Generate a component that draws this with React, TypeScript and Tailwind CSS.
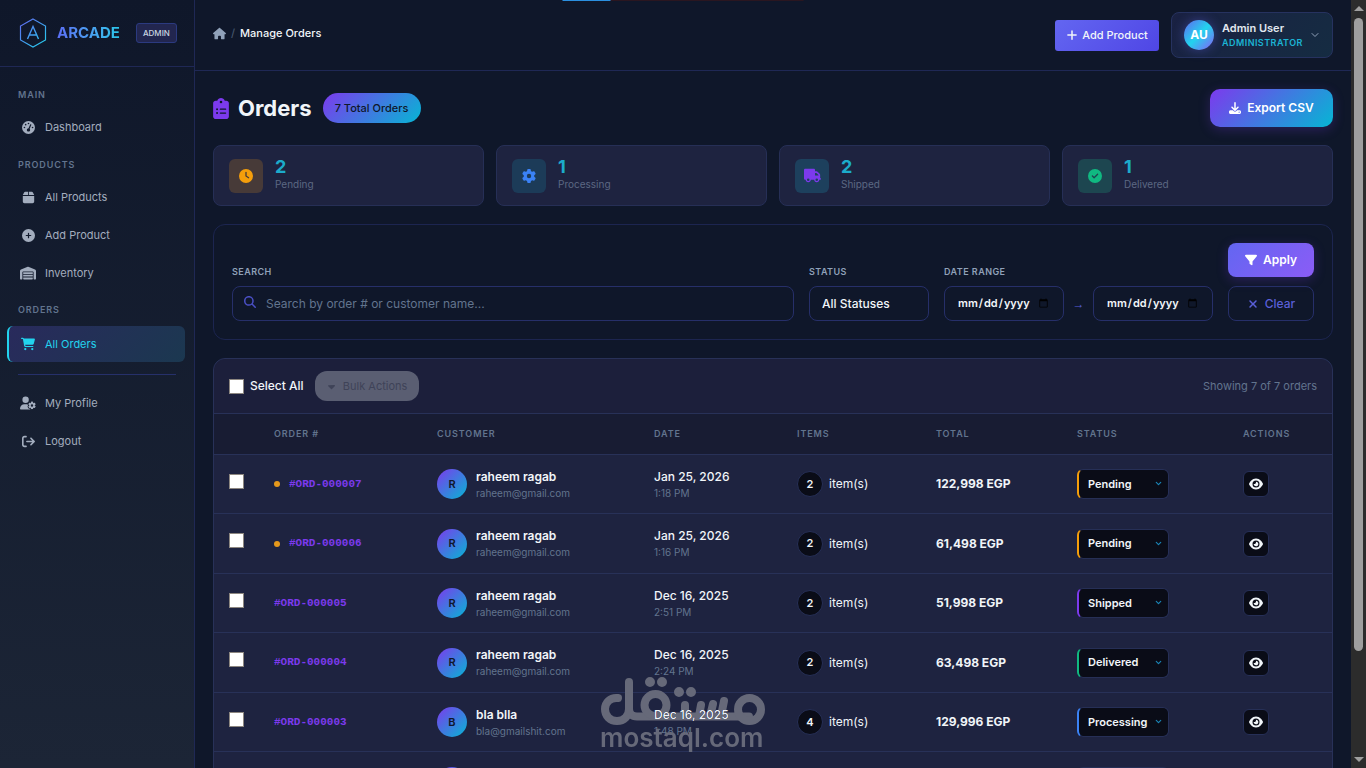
import type { ReactNode } from "react";
import {
  FaArrowRightFromBracket,
  FaBox,
  FaCartShopping,
  FaCaretDown,
  FaCircleCheck,
  FaCirclePlus,
  FaClipboardList,
  FaClock,
  FaDownload,
  FaEye,
  FaFilter,
  FaGaugeHigh,
  FaGear,
  FaHouse,
  FaMagnifyingGlass,
  FaPlus,
  FaTruck,
  FaUserGear,
  FaWarehouse,
  FaXmark,
} from "react-icons/fa6";
import { FiChevronDown } from "react-icons/fi";

type Order = {
  id: string;
  unread?: boolean;
  name: string;
  email: string;
  date: string;
  time: string;
  items: number;
  total: string;
  status: string;
};

const orders: Order[] = [
  { id: "000007", unread: true, name: "raheem ragab", email: "raheem@gmail.com", date: "Jan 25, 2026", time: "1:18 PM", items: 2, total: "122,998 EGP", status: "Pending" },
  { id: "000006", unread: true, name: "raheem ragab", email: "raheem@gmail.com", date: "Jan 25, 2026", time: "1:16 PM", items: 2, total: "61,498 EGP", status: "Pending" },
  { id: "000005", name: "raheem ragab", email: "raheem@gmail.com", date: "Dec 16, 2025", time: "2:51 PM", items: 2, total: "51,998 EGP", status: "Shipped" },
  { id: "000004", name: "raheem ragab", email: "raheem@gmail.com", date: "Dec 16, 2025", time: "2:24 PM", items: 2, total: "63,498 EGP", status: "Delivered" },
  { id: "000003", name: "bla blla", email: "bla@gmailshit.com", date: "Dec 16, 2025", time: "1:48 PM", items: 4, total: "129,996 EGP", status: "Processing" },
  { id: "000002", name: "raheem ragab", email: "raheem@gmail.com", date: "Dec 16, 2025", time: "1:32 PM", items: 1, total: "32,499 EGP", status: "Cancelled" },
];

const statusBorder: Record<string, string> = {
  Pending: "border-l-[#f59e0b]",
  Shipped: "border-l-[#7c3aed]",
  Delivered: "border-l-[#10b981]",
  Processing: "border-l-[#3b82f6]",
  Cancelled: "border-l-[#ef4444]",
};

const NavTitle = ({ children }: { children: ReactNode }) => (
  <h2 className="px-[18px] text-[9px] leading-3 font-semibold tracking-widest text-slate-500">
    {children}
  </h2>
);

const NavItem = ({ icon, label, active }: { icon: ReactNode; label: string; active?: boolean }) => (
  <a
    href="#"
    className={
      active
        ? "ml-[7px] mr-[9px] flex h-9 items-center rounded-md border-l-2 border-[#22d3ee] bg-linear-135/srgb from-[#292a5c] to-[#1b3850] pl-[11px] text-[11px] text-[#22d3ee]"
        : "ml-[7px] mr-[9px] flex h-9 items-center rounded-md border-l-2 border-transparent pl-[11px] text-[11px] text-[#a3adbe]"
    }
  >
    <span className="mr-[9px] flex w-4 justify-center text-[13px]">{icon}</span>
    {label}
  </a>
);

const Sidebar = () => (
  <aside className="flex w-[195px] shrink-0 flex-col border-r border-[#1f2855] bg-linear-to-b from-[#0f172a] to-[#1c2536]">
    <div className="flex h-[67px] shrink-0 items-center border-b border-[#1f2855] pl-[18px]">
      <svg width="30" height="30" viewBox="0 0 30 30" fill="none" aria-hidden="true">
        <defs>
          <linearGradient id="logo" x1="2" y1="2" x2="28" y2="28" gradientUnits="userSpaceOnUse">
            <stop stopColor="#6366f1" />
            <stop offset="1" stopColor="#22d3ee" />
          </linearGradient>
        </defs>
        <path d="M15 1 L27.5 8 V22 L15 29 L2.500 22 V8 Z" stroke="url(#logo)" strokeWidth="1.200" />
        <path d="M9.500 21 L15 8.500 L20.500 21 M11.500 17 H18.500" stroke="url(#logo)" strokeWidth="1.400" />
      </svg>
      <span className="ml-[9px] bg-linear-to-r from-[#5b6ef5] to-[#26c6ea] bg-clip-text text-[15px] font-bold text-transparent">
        ARCADE
      </span>
      <span className="ml-4 rounded-[3px] border border-[#2b3a80] bg-[#22264f] px-[6px] text-[8px] leading-[18px] font-medium text-slate-300">
        ADMIN
      </span>
    </div>
    <nav className="flex flex-col">
      <div className="mt-[22px]"><NavTitle>MAIN</NavTitle></div>
      <div className="mt-2"><NavItem icon={<FaGaugeHigh />} label="Dashboard" /></div>
      <div className="mt-[14px]"><NavTitle>PRODUCTS</NavTitle></div>
      <div className="mt-2 flex flex-col gap-[2px]">
        <NavItem icon={<FaBox />} label="All Products" />
        <NavItem icon={<FaCirclePlus />} label="Add Product" />
        <NavItem icon={<FaWarehouse className="size-4" />} label="Inventory" />
      </div>
      <div className="mt-[13px]"><NavTitle>ORDERS</NavTitle></div>
      <div className="mt-[10px]"><NavItem icon={<FaCartShopping className="size-[14px]" />} label="All Orders" active /></div>
      <hr className="mx-[18px] mt-3 mb-[10px] border-[#26306a]" />
      <div className="flex flex-col gap-[2px]">
        <NavItem icon={<FaUserGear className="size-4" />} label="My Profile" />
        <NavItem icon={<FaArrowRightFromBracket />} label="Logout" />
      </div>
    </nav>
  </aside>
);

const Header = () => (
  <header className="flex h-[71px] shrink-0 items-center border-b border-[#1f2855] px-[18px]">
    <nav aria-label="Breadcrumb" className="flex items-center pb-1 text-[11px] font-medium text-slate-100">
      <a href="#" aria-label="Home" className="text-[13px] text-slate-400"><FaHouse /></a>
      <span className="mx-[5px] text-slate-600">/</span>
      Manage Orders
    </nav>
    <button className="ml-auto flex h-[31px] w-[104px] items-center justify-center gap-1 rounded-[3px] bg-linear-135/srgb from-[#6366f1] to-[#4f46e5] text-[11px] font-medium text-slate-100">
      <FaPlus className="size-3" /> Add Product
    </button>
    <button className="ml-3 flex h-[46px] w-[162px] items-center rounded-lg border border-[#26325f] bg-linear-135/srgb from-[#1a2142] to-[#152c42] pl-3 text-left">
      <span className="flex size-[30px] items-center justify-center rounded-full bg-linear-135/srgb from-[#6366f1] via-[#22d3ee] to-[#8b5cf6] text-xs font-bold text-white shadow-[0_0_12px_#6366f166]">
        AU
      </span>
      <span className="ml-2 flex flex-col">
        <span className="text-[11px] leading-4 font-semibold text-slate-200">Admin User</span>
        <span className="text-[9px] leading-[14px] font-semibold tracking-wider text-[#1cb4d4]">ADMINISTRATOR</span>
      </span>
      <FiChevronDown className="ml-[6px] size-3 text-slate-400" />
    </button>
  </header>
);

const StatCard = ({ icon, tone, count, label }: { icon: ReactNode; tone: string; count: number; label: string }) => (
  <div className="flex h-[61px] items-center gap-3 rounded-lg border border-[#262f56] bg-[#1e2340] px-[15px]">
    <span className={`flex size-[34px] items-center justify-center rounded-md text-sm ${tone}`}>{icon}</span>
    <div className="pb-1">
      <div className="text-lg leading-5 font-bold text-[#1cabcb]">{count}</div>
      <div className="text-[10px] leading-[14px] text-[#5c6883]">{label}</div>
    </div>
  </div>
);

const fieldStyle =
  "block h-[35px] rounded-lg border border-[#262f69] bg-transparent text-slate-100 placeholder:text-slate-500 focus:outline-none focus:border-indigo-500";
const labelStyle = "mb-2 block text-[9px] leading-3 font-semibold tracking-wider text-slate-400";

const Filters = () => (
  <form className="mt-[18px] flex h-[116px] items-end rounded-xl border border-[#1c2550] px-[18px] pb-[18px]">
    <div className="flex-1">
      <label htmlFor="search" className={labelStyle}>SEARCH</label>
      <div className="relative">
        <FaMagnifyingGlass className="absolute top-[10px] left-3 size-3 text-[#4a4fc4]" />
        <input id="search" type="text" placeholder="Search by order # or customer name..." className={`${fieldStyle} w-full pl-[33px] text-xs`} />
      </div>
    </div>
    <div className="ml-[15px]">
      <label htmlFor="status" className={labelStyle}>STATUS</label>
      <select id="status" className={`${fieldStyle} w-[120px] appearance-none px-3 text-xs font-medium`}>
        <option>All Statuses</option>
        <option>Pending</option>
        <option>Processing</option>
        <option>Shipped</option>
        <option>Delivered</option>
      </select>
    </div>
    <div className="ml-[15px]">
      <label htmlFor="from" className={labelStyle}>DATE RANGE</label>
      <div className="flex items-center">
        <input id="from" type="date" className={`${fieldStyle} w-[120px] px-3 text-[11px] font-semibold`} />
        <span className="w-[29px] text-center font-['Liberation_Sans',sans-serif] text-xs text-[#5a5fd8]">→</span>
        <input type="date" aria-label="To date" className={`${fieldStyle} w-[120px] px-3 text-[11px] font-semibold`} />
      </div>
    </div>
    <div className="ml-[15px] flex w-[86px] flex-col gap-[9px]">
      <button type="button" className="flex h-[34px] items-center justify-center gap-[6px] rounded-lg bg-linear-135/srgb from-[#6366f1] to-[#8b5cf6] text-xs font-semibold text-white shadow-[0_3px_12px_#7c3aed40]">
        <FaFilter /> Apply
      </button>
      <button type="reset" className="flex h-[35px] items-center justify-center gap-[6px] rounded-lg border border-[#262f69] text-xs font-medium text-[#5a5fd8]">
        <FaXmark /> Clear
      </button>
    </div>
  </form>
);

const headings = ["ORDER #", "CUSTOMER", "DATE", "ITEMS", "TOTAL", "STATUS", "ACTIONS"];

const Checkbox = ({ id, label }: { id: string; label: string }) => (
  <input
    id={id}
    type="checkbox"
    aria-label={label}
    className="block size-[15px] appearance-none border border-[#8c8680] bg-white checked:bg-blue-500"
  />
);

const OrderRow = ({ order }: { order: Order }) => (
  <tr className="border-t border-[#283158] odd:h-[59px] even:h-[60px]">
    <td className="pb-[6px] pl-[15px]"><Checkbox id={order.id} label={`Select order ${order.id}`} /></td>
    <td className="pl-3">
      <span className="flex items-center font-['Liberation_Mono',monospace] text-[11px] font-bold text-[#7c3aed]">
        {order.unread && <span className="mr-[9px] size-[6px] rounded-full bg-[#e5981c]" />}
        #ORD-{order.id}
      </span>
    </td>
    <td className="pl-3">
      <div className="flex items-center gap-[9px]">
        <span className="flex size-[30px] items-center justify-center rounded-full bg-linear-135/srgb from-[#7c3aed] to-[#06b6d4] text-[11px] font-semibold text-slate-900">
          {order.name[0].toUpperCase()}
        </span>
        <div>
          <div className="text-xs leading-[18px] font-semibold text-slate-100">{order.name}</div>
          <div className="text-[10px] leading-[15px] text-slate-500">{order.email}</div>
        </div>
      </div>
    </td>
    <td className="pl-3">
      <div className="text-xs leading-[18px] font-medium text-slate-100">{order.date}</div>
      <div className="text-[10px] leading-[15px] text-slate-500">{order.time}</div>
    </td>
    <td className="pl-3">
      <span className="flex items-center gap-[6px] text-xs text-slate-100">
        <span className="flex size-[26px] items-center justify-center rounded-full border border-[#262f56] bg-[#0a0c17] text-[11px] font-semibold">
          {order.items}
        </span>
        item(s)
      </span>
    </td>
    <td className="pl-3 text-xs font-bold text-slate-100">{order.total}</td>
    <td className="pl-3">
      <div className="relative w-[92px]">
        <select
          aria-label={`Status of order ${order.id}`}
          defaultValue={order.status}
          className={`block h-[30px] w-full appearance-none rounded-md border border-l-2 border-[#262f56] bg-[#0a0c17] pl-[9px] text-[11px] font-semibold text-slate-100 ${statusBorder[order.status]}`}
        >
          {Object.keys(statusBorder).map((s) => (
            <option key={s}>{s}</option>
          ))}
        </select>
        <FiChevronDown className="pointer-events-none absolute top-[10px] right-[6px] size-[9px] stroke-3 text-[#1a86b8]" />
      </div>
    </td>
    <td className="pl-3">
      <button aria-label={`View order ${order.id}`} className="flex size-[26px] items-center justify-center rounded-md border border-[#262f56] bg-[#0a0c17] text-slate-100">
        <FaEye className="size-[14px]" />
      </button>
    </td>
  </tr>
);

const OrdersTable = () => (
  <section className="mt-[18px] rounded-t-xl border border-[#283158] bg-[#1e2340]">
    <div className="flex h-[54px] items-center rounded-t-xl bg-[#1c1f3b] px-[15px]">
      <Checkbox id="all" label="Select All" />
      <label htmlFor="all" className="ml-[6px] text-xs font-medium text-slate-100">Select All</label>
      <button disabled className="ml-[11px] flex h-[30px] w-[104px] items-center justify-center gap-[6px] rounded-xl bg-[#5a5e72] text-[11px] text-[#3f4358]">
        <FaCaretDown /> Bulk Actions
      </button>
      <span className="ml-auto text-[11px] text-slate-500">Showing 7 of 7 orders</span>
    </div>
    <table className="w-full table-fixed border-collapse text-left">
      <colgroup>
        <col className="w-[48px]" />
        <col className="w-[163px]" />
        <col className="w-[217px]" />
        <col className="w-[143px]" />
        <col className="w-[139px]" />
        <col className="w-[141px]" />
        <col className="w-[166px]" />
        <col className="w-[101px]" />
      </colgroup>
      <thead>
        <tr className="h-[41px] border-t border-[#283158] bg-[#181c33]">
          <td />
          {headings.map((h) => (
            <th key={h} className="pl-3 text-[9px] font-semibold tracking-widest text-slate-500">{h}</th>
          ))}
        </tr>
      </thead>
      <tbody>
        {orders.map((order) => (
          <OrderRow key={order.id} order={order} />
        ))}
      </tbody>
    </table>
  </section>
);

const Watermark = () => (
  <div className="pointer-events-none fixed top-[675px] left-[600px] text-[#666979] mix-blend-lighten">
    <svg width="166" height="52" viewBox="0 0 166 52" fill="none" stroke="currentColor" strokeWidth="8" strokeLinecap="round" aria-hidden="true">
      <path d="M18 23 C10 22 5 28 5 34 C5 41 10 46 17 46 C24 46 29 41 29 34 V7 M29 34 C29 39 32 41.500 37 41.500 H149" />
      <circle cx="55.500" cy="30" r="11" />
      <circle cx="149.500" cy="34.500" r="11.500" />
      <path d="M85 41 V30 M99 41 L101 30 M110 41 L113 29 M121 41 L124 26" />
      <path d="M50 7 h0 M62 7 h0 M79 17 h0 M91 17 h0" strokeWidth="10" />
    </svg>
    <div className="-mt-[3px] text-[26px] leading-7 font-semibold">mostaql.com</div>
  </div>
);

const App = () => (
  <div className="flex h-screen overflow-hidden bg-[#0f172a] font-[Inter,sans-serif]">
    <Sidebar />
    <div className="flex min-w-0 flex-1 flex-col">
      <Header />
      <main className="min-h-0 flex-1 overflow-y-auto px-[18px] pt-[18px] [scrollbar-width:none]">
        <div className="flex h-[38px] items-center">
          <FaClipboardList className="h-[21px] w-4 text-[#7c3aed]" />
          <h1 className="ml-[9px] text-[22px] font-bold text-slate-100">Orders</h1>
          <span className="ml-[11px] rounded-full bg-linear-135/srgb from-[#7c3aed] to-[#06b6d4] px-3 text-[11px] leading-[30px] font-medium text-slate-900">
            7 Total Orders
          </span>
          <button className="ml-auto flex h-[38px] w-[123px] items-center justify-center gap-[6px] rounded-[10px] bg-linear-135/srgb from-[#7c3aed] to-[#06b6d4] text-xs font-semibold text-white shadow-[0_3px_12px_#7c3aed40]">
            <FaDownload /> Export CSV
          </button>
        </div>
        <div className="mt-[18px] grid grid-cols-4 gap-3">
          <StatCard icon={<FaClock />} tone="bg-[#473a38] text-[#f59e0b]" count={2} label="Pending" />
          <StatCard icon={<FaGear />} tone="bg-[#1c3b58] text-[#3b82f6]" count={1} label="Processing" />
          <StatCard icon={<FaTruck className="size-[17px]" />} tone="bg-[#1d405d] text-[#7c3aed]" count={2} label="Shipped" />
          <StatCard icon={<FaCircleCheck />} tone="bg-[#1d4650] text-[#10b981]" count={1} label="Delivered" />
        </div>
        <Filters />
        <OrdersTable />
      </main>
    </div>
    <div className="flex w-[15px] shrink-0 flex-col items-center bg-[#2c2c2c] py-[6px]" aria-hidden="true">
      <span className="border-x-[5px] border-b-[5px] border-x-transparent border-b-[#9f9f9f]" />
      <span className="mt-[7px] mb-[106px] w-[9px] flex-1 rounded-full bg-[#9f9f9f]" />
      <span className="border-x-[5px] border-t-[5px] border-x-transparent border-t-[#9f9f9f]" />
    </div>
    {/* loading bar */}
    <div className="fixed top-0 left-1/2 h-px w-[241px] -translate-x-1/2 bg-[#2a1620]" aria-hidden="true">
      <div className="h-full w-1/5 bg-[#2b8fdf]" />
    </div>
    <Watermark />
  </div>
);

export default App;
